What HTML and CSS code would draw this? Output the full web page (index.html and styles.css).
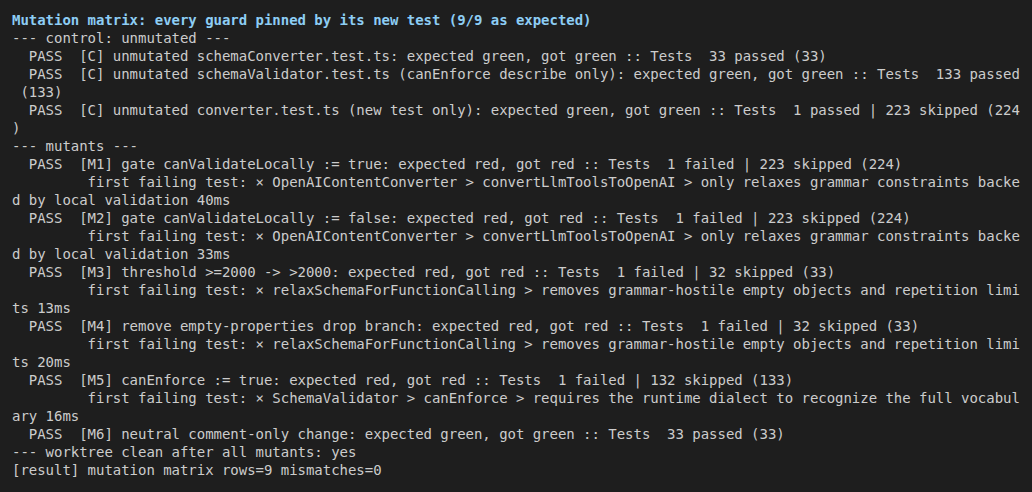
FILE: index.html
```html
<!DOCTYPE html>
<html>
<head>
<meta charset="utf-8">
<link rel="stylesheet" href="styles.css">
</head>
<body>
<div class="term">
<div class="title">Mutation matrix: every guard pinned by its new test (9/9 as expected)</div>
<pre class="out">--- control: unmutated ---
  PASS  [C] unmutated schemaConverter.test.ts: expected green, got green :: Tests  33 passed (33)
  PASS  [C] unmutated schemaValidator.test.ts (canEnforce describe only): expected green, got green :: Tests  133 passed
 (133)
  PASS  [C] unmutated converter.test.ts (new test only): expected green, got green :: Tests  1 passed | 223 skipped (224
)
--- mutants ---
  PASS  [M1] gate canValidateLocally := true: expected red, got red :: Tests  1 failed | 223 skipped (224)
         first failing test: × OpenAIContentConverter &gt; convertLlmToolsToOpenAI &gt; only relaxes grammar constraints backe
d by local validation 40ms
  PASS  [M2] gate canValidateLocally := false: expected red, got red :: Tests  1 failed | 223 skipped (224)
         first failing test: × OpenAIContentConverter &gt; convertLlmToolsToOpenAI &gt; only relaxes grammar constraints backe
d by local validation 33ms
  PASS  [M3] threshold &gt;=2000 -&gt; &gt;2000: expected red, got red :: Tests  1 failed | 32 skipped (33)
         first failing test: × relaxSchemaForFunctionCalling &gt; removes grammar-hostile empty objects and repetition limi
ts 13ms
  PASS  [M4] remove empty-properties drop branch: expected red, got red :: Tests  1 failed | 32 skipped (33)
         first failing test: × relaxSchemaForFunctionCalling &gt; removes grammar-hostile empty objects and repetition limi
ts 20ms
  PASS  [M5] canEnforce := true: expected red, got red :: Tests  1 failed | 132 skipped (133)
         first failing test: × SchemaValidator &gt; canEnforce &gt; requires the runtime dialect to recognize the full vocabul
ary 16ms
  PASS  [M6] neutral comment-only change: expected green, got green :: Tests  33 passed (33)
--- worktree clean after all mutants: yes
[result] mutation matrix rows=9 mismatches=0</pre>
</div>
</body>
</html>
```
FILE: styles.css
```css
html, body {
  margin: 0;
  padding: 0;
  background: #1e1e1e;
}
.term {
  width: 1032px;
  height: 492px;
  box-sizing: border-box;
  padding: 11px 0 0 12px;
  background: #1e1e1e;
  color: #cccccc;
  font-family: "DejaVu Sans Mono", monospace;
  font-size: 14px;
  line-height: 18px;
  letter-spacing: -0.03px;
  overflow: hidden;
}
.title {
  color: #8dcdf4;
  font-weight: bold;
  white-space: pre;
}
.out {
  margin: 0;
  font: inherit;
  letter-spacing: inherit;
  white-space: pre;
}
```
